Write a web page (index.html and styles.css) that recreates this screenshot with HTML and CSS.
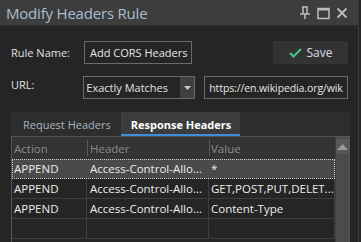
FILE: index.html
```html
<!DOCTYPE html>
<html lang="en">

<head>
    <meta charset="UTF-8">
    <title>Modify Headers Rule</title>
    <link rel="stylesheet" href="styles.css">
</head>

<body>
    <div class="window">
        <div class="title-bar">
            <span class="title">Modify Headers Rule</span>
            <div class="title-icons">
                <svg width="12" height="14" viewBox="0 0 12 14"><path d="M3 1h6M4 1v7M8 1v7M1 8h10M6 8v5" stroke="#bdbdbd" stroke-width="1.5" fill="none"/></svg>
                <svg width="13" height="13" viewBox="0 0 13 13"><rect x="1" y="1.5" width="11" height="10" stroke="#bdbdbd" stroke-width="1.5" fill="none"/><path d="M1 2.5h11" stroke="#bdbdbd" stroke-width="2"/></svg>
                <svg width="12" height="12" viewBox="0 0 12 12"><path d="M1.5 1.5l9 9M10.5 1.5l-9 9" stroke="#bdbdbd" stroke-width="1.8"/></svg>
            </div>
        </div>

        <div class="content">
            <div class="form-row">
                <label class="field-label">Rule Name:</label>
                <div class="text-box name-box">Add CORS Headers</div>
                <button class="save-btn">
                    <svg width="13" height="10" viewBox="0 0 13 10"><path d="M1 5l3.5 3.5L12 1" stroke="#4cc38a" stroke-width="2" fill="none"/></svg>
                    Save
                </button>
            </div>

            <div class="form-row url-row">
                <label class="field-label">URL:</label>
                <div class="select-box">
                    <span class="select-text">Exactly Matches</span>
                    <span class="select-arrow"><svg width="7" height="4" viewBox="0 0 7 4"><path d="M0 0h7L3.5 4z" fill="#c8c8c8"/></svg></span>
                </div>
                <div class="text-box url-box">https://en.wikipedia.org/wik</div>
            </div>

            <div class="tabs">
                <div class="tab">Request Headers</div>
                <div class="tab active">Response Headers</div>
            </div>

            <div class="grid">
                <div class="grid-body">
                    <div class="grid-row grid-head">
                        <div class="cell c-action">Action</div>
                        <div class="cell c-header"><span class="sep"></span>Header</div>
                        <div class="cell c-value"><span class="sep"></span>Value</div>
                    </div>
                    <div class="grid-row selected">
                        <div class="cell c-action">APPEND</div>
                        <div class="cell c-header">Access-Control-Allo...</div>
                        <div class="cell c-value">*</div>
                    </div>
                    <div class="grid-row">
                        <div class="cell c-action">APPEND</div>
                        <div class="cell c-header">Access-Control-Allo...</div>
                        <div class="cell c-value">GET,POST,PUT,DELET...</div>
                    </div>
                    <div class="grid-row">
                        <div class="cell c-action">APPEND</div>
                        <div class="cell c-header">Access-Control-Allo...</div>
                        <div class="cell c-value">Content-Type</div>
                    </div>
                    <div class="grid-row">
                        <div class="cell c-action"></div>
                        <div class="cell c-header"></div>
                        <div class="cell c-value"></div>
                    </div>
                </div>
                <div class="scrollbar">
                    <div class="scroll-up"><svg width="11" height="6" viewBox="0 0 11 6"><path d="M0 6L5.5 0L11 6z" fill="#9a9a9a"/></svg></div>
                </div>
            </div>
        </div>
    </div>
</body>

</html>
```

FILE: styles.css
```css
* {
    box-sizing: border-box;
}

body {
    margin: 0;
    background: #252526;
    font-family: "Open Sans", "Noto Sans", sans-serif;
    font-size: 11px;
    color: #e2e2e2;
    overflow: hidden;
}

.window {
    width: 359px;
    height: 242px;
    border-right: 1px solid #3a3a3a;
    background: #252526;
}

/* 標題欄 */
.title-bar {
    height: 26px;
    background: #3d3d3d;
    border-bottom: 1px solid #2a2a2a;
    display: flex;
    align-items: center;
    justify-content: space-between;
    padding: 0 10px 0 6px;
}

.title {
    font-size: 15px;
    color: #a9bdd2;
    letter-spacing: -0.2px;
}

.title-icons {
    display: flex;
    align-items: center;
    gap: 6px;
    padding-top: 1px;
}

.content {
    padding: 15px 10px 0 11px;
}

/* 表單行 */
.form-row {
    display: flex;
    align-items: center;
    height: 23px;
}

.url-row {
    margin-top: 12px;
}

.field-label {
    width: 73px;
    color: #e0e0e0;
}

.url-row .field-label {
    align-self: flex-start;
    padding-top: 1px;
}

.text-box {
    height: 23px;
    border: 1px solid #6a6a6a;
    padding: 0 5px;
    display: flex;
    align-items: center;
    white-space: nowrap;
    overflow: hidden;
    color: #e6e6e6;
}

.name-box {
    width: 108px;
}

.url-box {
    width: 145px;
    margin-left: 9px;
    padding: 0 4px;
    font-size: 10.5px;
    letter-spacing: -0.1px;
}

.save-btn {
    margin-left: auto;
    width: 75px;
    height: 23px;
    background: #333333;
    border: none;
    color: #d8dde6;
    font-family: inherit;
    font-size: 12px;
    display: flex;
    align-items: center;
    justify-content: center;
    gap: 5px;
    padding: 0;
}

.select-box {
    width: 113px;
    height: 23px;
    border: 1px solid #6a6a6a;
    display: flex;
    align-items: stretch;
}

.select-text {
    flex: 1;
    padding-left: 2px;
    display: flex;
    align-items: center;
    white-space: nowrap;
}

.select-arrow {
    width: 14px;
    background: #3f3f3f;
    display: flex;
    align-items: center;
    justify-content: center;
}

/* 分頁標籤 */
.tabs {
    margin-top: 13px;
    height: 24px;
    background: #2d2d2d;
    display: flex;
    width: 339px;
}

.tab {
    padding: 0 10px 0 12px;
    display: flex;
    align-items: center;
    color: #a8b4c0;
    font-size: 11px;
}

.tab.active {
    background: #3c3c3c;
    color: #ffffff;
    font-weight: bold;
    font-size: 11px;
    border-bottom: 2px solid #3c8fd8;
    padding: 2px 9px 0 10px;
}

/* 表格 */
.grid {
    width: 339px;
    height: 110px;
    border: 1px solid #555555;
    border-bottom: none;
    display: flex;
}

.grid-body {
    flex: 1;
}

.grid-row {
    display: flex;
    height: 20px;
    border-bottom: 1px solid #3e3e3e;
}

.grid-head {
    height: 22px;
    background: #333333;
    border-bottom: none;
}

.grid-head .cell {
    color: #8c8c8c;
    border-right: none;
    position: relative;
}

.sep {
    position: absolute;
    left: 0;
    top: 3px;
    bottom: 3px;
    border-left: 1px solid #5a5a5a;
}

.cell {
    display: flex;
    align-items: center;
    padding-left: 2px;
    border-right: 1px solid #3e3e3e;
    white-space: nowrap;
    overflow: hidden;
    font-size: 11.5px;
    color: #ececec;
}

.c-action {
    width: 75px;
}

.c-header {
    width: 122px;
    padding-left: 3px;
}

.c-value {
    flex: 1;
}

.selected {
    background: #4a4a4a;
    outline: 1px dotted #cfcfcf;
    outline-offset: -1px;
}

.selected .cell {
    border-right-color: transparent;
}

.scrollbar {
    width: 16px;
    background: #4b4b4b;
    border-left: 1px solid #3e3e3e;
    padding-top: 2px;
}

.scroll-up {
    height: 15px;
    background: #585858;
    display: flex;
    align-items: center;
    justify-content: center;
}
```
